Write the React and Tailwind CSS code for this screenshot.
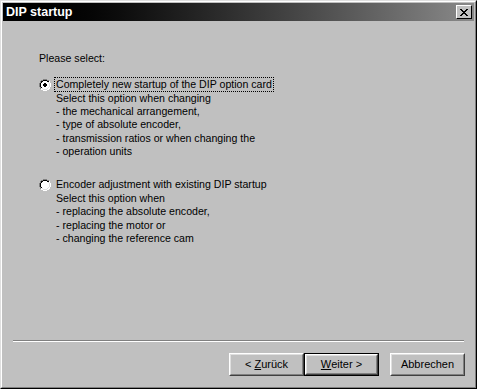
import React from "react";

const FONT = { fontFamily: '"Liberation Sans", Arial, sans-serif' };

function Radio({ checked }) {
  return (
    <svg width="12" height="12" viewBox="0 0 12 12" className="shrink-0">
      <path d="M4 0h4v1h2v1h1v2h1v4h-1v2h-1v1H8v1H4v-1H2v-1H1V8H0V4h1V2h1V1h2z" fill="#fff" />
      <path d="M4 0h4v1H4zM2 1h2v1H2zM8 1h2v1H8zM1 2h1v2H1zM0 4h1v4H0zM1 8h1v2H1z" fill="#808080" />
      <path d="M4 1h4v1H4zM2 2h2v1H2zM8 2h2v1H8zM2 3h1v1H2zM1 4h1v4H1zM2 8h1v1H2z" fill="#000" />
      <path d="M10 2h1v2h-1zM11 4h1v4h-1zM10 8h1v2h-1zM8 10h2v1H8zM4 11h4v1H4zM2 10h2v1H2z" fill="#fff" />
      <path d="M9 3h1v1H9zM10 4h1v4h-1zM9 8h1v1H9zM8 9h1v1H8zM4 10h4v1H4zM3 9h1v1H3z" fill="#dfdfdf" />
      {checked && <path d="M5 4h2v1h1v2H7v1H5V7H4V5h1z" fill="#000" />}
    </svg>
  );
}

function Button({ children, isDefault }) {
  const inner = (
    <div className="border border-t-white border-l-white border-r-[#404040] border-b-[#404040] h-full">
      <div className="border border-t-[#dfdfdf] border-l-[#dfdfdf] border-r-[#808080] border-b-[#808080] h-full flex items-center justify-center text-[11px] text-black">
        {children}
      </div>
    </div>
  );
  return (
    <div className={`w-[75px] h-[23px] ${isDefault ? "border border-black" : ""}`}>
      {inner}
    </div>
  );
}

export default function App() {
  return (
    <div style={FONT} className="w-[477px] h-[389px] bg-[#c0c0c0] border border-t-[#dfdfdf] border-l-[#dfdfdf] border-r-black border-b-black">
      <div className="h-full border border-t-white border-l-white border-r-[#808080] border-b-[#808080] p-[1px] flex flex-col">
        <div className="h-[18px] bg-gradient-to-r from-black to-[#8a8a8a] flex items-center justify-between pl-[3px] pr-[2px]">
          <span className="text-white font-bold text-[12.5px] leading-none">DIP startup</span>
          <div className="w-[16px] h-[14px] bg-[#c0c0c0] border border-t-white border-l-white border-r-black border-b-black flex items-center justify-center">
            <svg width="8" height="7" viewBox="0 0 8 7">
              <path d="M0 0h2v1h1v1h2V1h1V0h2v1H7v1H6v1H5v1h1v1h1v1h1v1H6V6H5V5H3v1H2v1H0V6h1V5h1V4h1V3H2V2H1V1H0z" fill="#000" />
            </svg>
          </div>
        </div>

        <div className="flex-1 flex flex-col text-[10.6px] text-black leading-[13px]">
          <div className="pl-[36px] pt-[31px] flex-1">
            <div>Please select:</div>

            <div className="mt-[12px] flex items-center gap-[3px]">
              <Radio checked />
              <span className="border border-dotted border-black px-[1px]">
                Completely new startup of the DIP option card
              </span>
            </div>
            <div className="pl-[17px] leading-[13.2px]">
              <div>Select this option when changing</div>
              <div>- the mechanical arrangement,</div>
              <div>- type of absolute encoder,</div>
              <div>- transmission ratios or when changing the</div>
              <div>- operation units</div>
            </div>

            <div className="mt-[19px] flex items-center gap-[3px]">
              <Radio />
              <span className="border border-transparent px-[1px]">
                Encoder adjustment with existing DIP startup
              </span>
            </div>
            <div className="pl-[17px] leading-[13.4px]">
              <div>Select this option when</div>
              <div>- replacing the absolute encoder,</div>
              <div>- replacing the motor or</div>
              <div>- changing the reference cam</div>
            </div>
          </div>

          <div className="mx-[10px] border-t border-t-[#808080] border-b border-b-white" />

          <div className="flex justify-end pr-[9px] pt-[11px] pb-[10px]">
            <Button>
              &lt; <span className="underline ml-[3px]">Z</span>urück
            </Button>
            <Button isDefault>
              <span className="underline">W</span>eiter &gt;
            </Button>
            <div className="w-[11px]" />
            <Button>Abbrechen</Button>
          </div>
        </div>
      </div>
    </div>
  );
}
